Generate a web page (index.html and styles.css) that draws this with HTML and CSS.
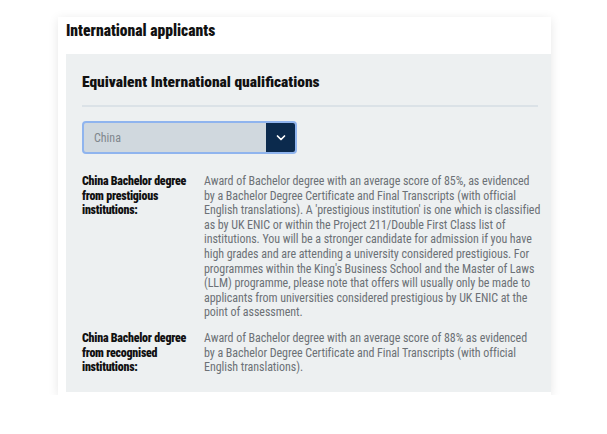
FILE: index.html
```html
<!DOCTYPE html>
<html>
<head>
<meta charset="utf-8">
<link rel="stylesheet" href="styles.css">
</head>
<body>
<section class="card">
  <h2 class="card-title">International applicants</h2>
  <div class="panel">
    <h3 class="panel-title">Equivalent International qualifications</h3>
    <div class="select">
      <span class="select-value">China</span>
      <span class="select-btn">
        <svg width="12" height="8" viewBox="0 0 12 8"><path d="M2.5 2 L6 5.5 L9.5 2" fill="none" stroke="#fff" stroke-width="1.7" stroke-linecap="round" stroke-linejoin="round"/></svg>
      </span>
    </div>
    <dl class="quals">
      <dt>China Bachelor degree from prestigious institutions:</dt>
      <dd>Award of Bachelor degree with an average score of 85%, as evidenced<br>by a Bachelor Degree Certificate and Final Transcripts (with official<br>English translations). A 'prestigious institution' is one which is classified<br>as by UK ENIC or within the Project 211/Double First Class list of<br>institutions. You will be a stronger candidate for admission if you have<br>high grades and are attending a university considered prestigious. For<br>programmes within the King's Business School and the Master of Laws<br>(LLM) programme, please note that offers will usually only be made to<br>applicants from universities considered prestigious by UK ENIC at the<br>point of assessment.</dd>
      <dt>China Bachelor degree from recognised institutions:</dt>
      <dd>Award of Bachelor degree with an average score of 88% as evidenced<br>by a Bachelor Degree Certificate and Final Transcripts (with official<br>English translations).</dd>
    </dl>
  </div>
</section>
</body>
</html>
```

FILE: styles.css
```css
html, body {
  margin: 0;
  padding: 0;
  background: #ffffff;
}
body {
  padding: 17px 56px 0 58px;
  font-family: "Roboto", "Liberation Sans", sans-serif;
  font-stretch: 75%;
}
.card {
  width: 493px;
  background: #fff;
  box-shadow: 0 2px 10px rgba(0,0,0,0.10);
  padding: 0 0 3px 8px;
  box-sizing: border-box;
}
.card-title {
  margin: 0;
  height: 37px;
  box-sizing: border-box;
  padding-top: 5px;
  font-size: 15.6px;
  line-height: 18px;
  font-weight: 900;
  color: #111;
}
.panel {
  background: #edf0f1;
  padding: 17px 8px 17px 16px;
}
.panel-title {
  margin: 0 5px 0 0;
  font-size: 15.5px;
  font-weight: 900;
  color: #111;
  line-height: 22px;
  padding-bottom: 12px;
  border-bottom: 2px solid #dbe2e7;
}
.select {
  margin-top: 14px;
  width: 215px;
  height: 33px;
  box-sizing: border-box;
  border: 2px solid #8fb4ee;
  border-radius: 4px;
  background: #d0d8de;
  display: flex;
  overflow: hidden;
}
.select-value {
  flex: 1;
  display: flex;
  align-items: center;
  padding-left: 10px;
  font-size: 12px;
  color: #80878d;
}
.select-btn {
  width: 29px;
  background: #0b2a4d;
  display: flex;
  align-items: center;
  justify-content: center;
}
.quals {
  margin: 20px 0 0 0;
  display: grid;
  grid-template-columns: 122px 1fr;
  row-gap: 11px;
}
.quals dt {
  font-size: 12px;
  font-weight: 900;
  color: #111;
  line-height: 14.6px;
  letter-spacing: -0.25px;
  padding-right: 4px;
}
.quals dd {
  margin: 0;
  font-size: 12px;
  color: #6c7176;
  line-height: 14.6px;
  white-space: nowrap;
  letter-spacing: -0.06px;
}
```
